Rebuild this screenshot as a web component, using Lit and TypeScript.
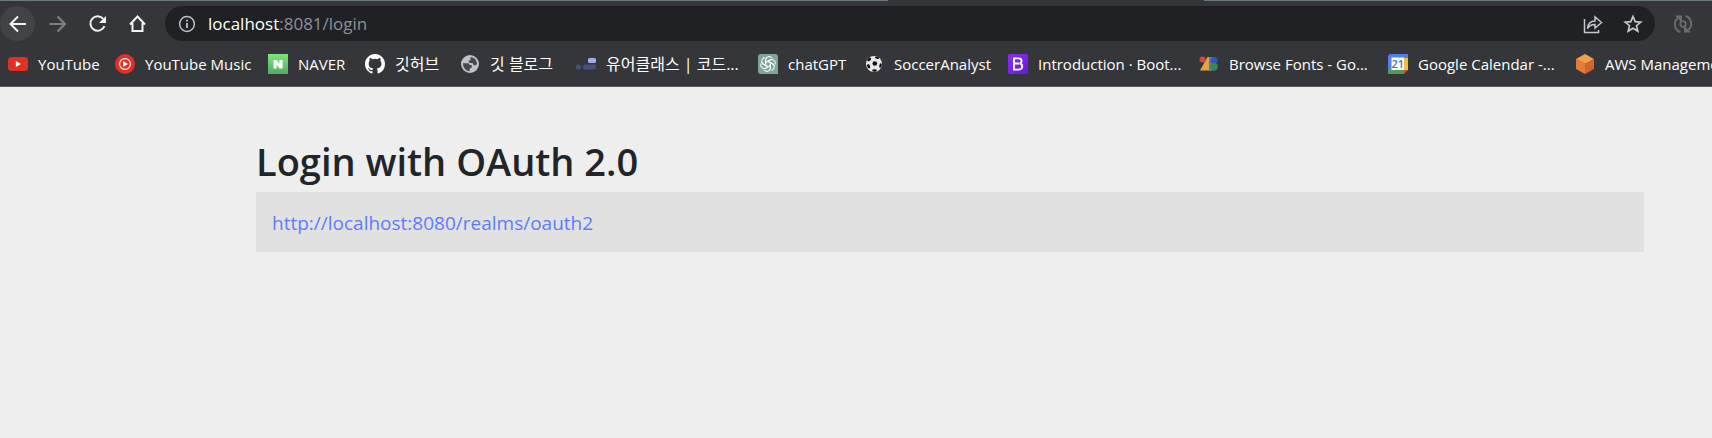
import { LitElement, html, svg, css } from "lit";
import { customElement } from "lit/decorators.js";

const icons = {
  youtube: svg`<rect y="3" width="20" height="14" rx="3.500" fill="#df3125"/><path d="M7.800 7v6l5.200-3z" fill="#fff"/>`,
  music: svg`<circle cx="10" cy="10" r="10" fill="#df3125"/><circle cx="10" cy="10" r="5.400" fill="none" stroke="#fff" stroke-width="1.100"/><path d="M8 6.900v6.200l5-3.100z" fill="#fff"/>`,
  naver: svg`<defs><linearGradient id="nv" x2="0" y2="1"><stop stop-color="#7ae779"/><stop offset="1" stop-color="#57a866"/></linearGradient></defs><rect width="20" height="20" fill="url(#nv)"/><path d="M5.500 6h3.200l2.700 3.900V6h3.200v8.400h-3.200L8.700 10.500v3.900H5.500z" fill="#fff"/>`,
  github: svg`<path transform="scale(1.25)" d="M8 0C3.580 0 0 3.580 0 8c0 3.540 2.290 6.530 5.470 7.590.4.070.55-.17.55-.38v-1.490c-2.010.37-2.530-.49-2.690-.94-.09-.23-.48-.94-.82-1.130-.28-.15-.68-.52-.01-.53.63-.01 1.080.58 1.230.82.72 1.210 1.870.87 2.330.66.070-.52.28-.87.51-1.070-1.780-.2-3.640-.89-3.640-3.950 0-.87.31-1.590.82-2.150-.08-.2-.36-1.020.08-2.120 0 0 .67-.21 2.200.82a7.500 7.500 0 0 1 4 0c1.530-1.040 2.200-.82 2.200-.82.44 1.100.16 1.920.08 2.120.51.56.82 1.270.82 2.150 0 3.070-1.870 3.750-3.650 3.950.29.25.54.73.54 1.480v2.200c0 .21.15.46.55.38A8 8 0 0 0 16 8c0-4.420-3.580-8-8-8z" fill="#fff"/>`,
  globe: svg`<circle cx="10" cy="10" r="9" fill="#bfc3c8"/><path d="M3 9.200h5.500l1.200 1.800h2v2.500l-2 1.200v2.500C5.600 17 3 13.600 3 9.200zM10.500 3c3.600.4 6.300 3.100 6.500 6.500l-.7 1.700h-2.500l-1.300-2.200H9.500l-1-2 2-1z" fill="#47494d"/>`,
  blocks: svg`<rect x="12" y="4" width="8" height="5" rx="1.500" fill="#a2adf0"/><rect y="10.500" width="5" height="5" rx="2" fill="#47527a"/><rect x="7" y="10.500" width="13" height="5" rx="2" fill="#47527a"/>`,
  gpt: svg`<path d="M3 0h14a3 3 0 0 1 3 3v17H3a3 3 0 0 1-3-3V3a3 3 0 0 1 3-3z" fill="#7fa597"/><g fill="none" stroke="#eef5f2" stroke-width="1.100">${[0, 60, 120, 180, 240, 300].map((a) => svg`<path transform="rotate(${a} 10 10)" d="M7.600 11.400V5.500a3.600 3.600 0 0 1 6.200-1.600M7.600 8.600l4.800-2.800a3.300 3.300 0 0 1 2.600-.2"/>`)}</g>`,
  ball: svg`<circle cx="10" cy="10" r="8" fill="#e9e9e9"/><g fill="#111"><ellipse cx="10.800" cy="9.500" rx="2.300" ry="2.300"/><ellipse cx="5.200" cy="5.400" rx="2.300" ry="1.400" transform="rotate(-40 5.200 5.400)"/><ellipse cx="13" cy="3.800" rx="2.200" ry="1" transform="rotate(22 13 3.800)"/><ellipse cx="4.600" cy="12.300" rx="1.400" ry="2.300" transform="rotate(-22 4.600 12.300)"/><ellipse cx="10.500" cy="16.500" rx="2.300" ry="1.200"/><ellipse cx="16.500" cy="11.500" rx="1.200" ry="2.300" transform="rotate(15 16.500 11.500)"/></g>`,
  boot: svg`<defs><linearGradient id="bs" x2="1" y2="1"><stop stop-color="#8a2cf5"/><stop offset="1" stop-color="#601ddb"/></linearGradient></defs><rect width="20" height="20" rx="2" fill="url(#bs)"/><path d="M6 4.400h4.700c3.500 0 3.700 4.300 1 5.100 3.500.5 3.400 6.100-1.100 6.100H6zM6 9.500h5" fill="none" stroke="#fff" stroke-width="1.900"/>`,
  fonts: svg`<path d="M8.500 3h4v13.500H1z" fill="#e5a33c"/><circle cx="3.500" cy="5.500" r="3" fill="#cf4b3d"/><path d="M10 3h4.500a4 4 0 0 1 1.500 7.200V16.500h-6z" fill="#4b7be0"/><circle cx="15" cy="6.500" r="3.500" fill="#3058b8"/><circle cx="15" cy="12.800" r="3.800" fill="#3a8a46"/>`,
  calendar: svg`<path d="M2 0h18v4H4v16H0V2z" fill="#557fe6"/><path d="M16 4h4v12h-4z" fill="#f0bd42"/><path d="M0 16h16v4H2a2 2 0 0 1-2-2z" fill="#4f9c52"/><path d="M16 16h4l-4 4z" fill="#d5483b"/><path d="M3.500 3.500h12.500v12.500h-12.500z" fill="#fff"/><text x="9.800" y="14" text-anchor="middle" font-family="Open Sans, sans-serif" font-size="11" font-weight="600" fill="#4770cf">21</text>`,
  aws: svg`<path d="M10 0l9 5-9 5-9-5z" fill="#f0a04b"/><path d="M1 5l9 4.500V20l-9-5z" fill="#e27b36"/><path d="M19 5l-9 4.500V20l9-5z" fill="#cf6530"/>`,
};

const bookmarks: [string, unknown, string?][] = [
  ["YouTube", icons.youtube],
  ["YouTube Music", icons.music],
  ["NAVER", icons.naver],
  ["깃허브", icons.github, "ko"],
  ["깃 블로그", icons.globe, "ko"],
  ["유어클래스 | 코드...", icons.blocks, "ko"],
  ["chatGPT", icons.gpt],
  ["SoccerAnalyst", icons.ball],
  ["Introduction · Boot...", icons.boot],
  ["Browse Fonts - Go...", icons.fonts],
  ["Google Calendar -...", icons.calendar],
  ["AWS Management", icons.aws],
];

const icon = (content: unknown) => html`<svg viewBox="0 0 20 20" width="20" height="20" aria-hidden="true">${content}</svg>`;

@customElement("app-root")
export class AppRoot extends LitElement {
  static styles = css`
    :host { display: block; min-height: 100vh; background: #eee; font-family: "Open Sans", "Noto Sans CJK KR", sans-serif; color: #212529; }
    * { box-sizing: border-box; }
    svg { display: block; flex: none; }
    button { display: grid; place-items: center; padding: 0; border: 0; background: none; color: #f1f3f4; border-radius: 50%; }
    .browser { background: #35363a; border-bottom: 1px solid #5b5c60; overflow: hidden; }
    .tabs { display: grid; grid-template-columns: 888px 316px 1fr; height: 1px; background: #6b7a80; }
    .active { grid-column: 2; background: #35363a; }
    .toolbar { display: flex; align-items: center; height: 45px; padding-right: 19px; }
    .nav { display: flex; gap: 5px; margin-right: 10px; }
    .nav button { width: 35px; height: 35px; }
    .nav .back { background: #424347; }
    .nav .forward { color: #7e8084; }
    .address { flex: 1; display: flex; align-items: center; height: 35px; padding: 0 12px; border-radius: 18px; background: #202124; color: #bdc1c6; }
    .address .url { flex: 1; margin-left: 11px; font-size: 17px; line-height: 24px; color: #8e9195; }
    .url .host { color: #fff; }
    .address button { width: 20px; height: 20px; margin-left: 20px; color: #c4c7cb; }
    .sync { width: 20px; height: 20px; margin-left: 18px; color: #6a6b6f; }
    .bookmarks { display: grid; grid-template-columns: 107px 153px 97px 95px 116px 182px 106px 144px 191px 189px 187px 137px; padding: 8px 0 12px 8px; }
    .bookmark { display: flex; align-items: center; gap: 10px; color: #fff; text-decoration: none; font-size: 15px; line-height: 20px; white-space: nowrap; }
    .bookmark:lang(ko) { font-size: 16px; }
    .content { padding: 50px 68px 0 256px; }
    h2 { margin: 0 0 7px; font-size: 38px; line-height: 48px; font-weight: 600; }
    .providers { width: 100%; border-spacing: 0; background: #e1e1e1; }
    td { height: 60px; padding: 2px 16px 0; font-size: 19px; line-height: 28px; }
    td a { color: #5c7cfa; text-decoration: none; }
  `;

  render() {
    return html`
      <header class="browser">
        <div class="tabs"><div class="active"></div></div>
        <div class="toolbar">
          <nav class="nav">
            <button class="back" aria-label="Back">${icon(svg`<path d="M18 10H3M10 2.500L2.500 10l7.500 7.500" fill="none" stroke="currentColor" stroke-width="2"/>`)}</button>
            <button class="forward" aria-label="Forward">${icon(svg`<path d="M1.500 10h15M9.500 2.500l7.500 7.500-7.500 7.500" fill="none" stroke="currentColor" stroke-width="2"/>`)}</button>
            <button aria-label="Reload">${icon(svg`<path d="M15.500 5a7.300 7.300 0 1 0 1 7.200" fill="none" stroke="currentColor" stroke-width="2"/><path d="M18 2v7h-7z" fill="currentColor"/>`)}</button>
            <button aria-label="Home">${icon(svg`<path d="M2 10.500l7.500-8 7.500 8M4.500 9v8h10V9" fill="none" stroke="currentColor" stroke-width="2"/>`)}</button>
          </nav>
          <div class="address">
            ${icon(svg`<circle cx="10" cy="10" r="7.400" fill="none" stroke="currentColor" stroke-width="1.500"/><path d="M10 9v5M10 5.800v1.800" stroke="currentColor" stroke-width="1.800"/>`)}
            <div class="url"><span class="host">localhost</span>:8081/login</div>
            <button aria-label="Share">${icon(svg`<path d="M1.500 5v13.500h14V16M4.500 14.500c.5-4.800 3-7.500 7.500-7.500V2.800l6.500 5.700L12 14.200v-3.700c-3.500-.1-5.800 1.200-7.500 4z" fill="none" stroke="currentColor" stroke-width="1.500"/>`)}</button>
            <button aria-label="Bookmark this page">${icon(svg`<path d="M10 2.500l2.200 5.100 5.500.5-4.200 3.600 1.300 5.400-4.800-2.900-4.800 2.900 1.300-5.400-4.200-3.600 5.500-.5z" fill="none" stroke="currentColor" stroke-width="1.700"/>`)}</button>
          </div>
          <button class="sync" aria-label="Sync">${icon(svg`<path d="M5 4a8 8 0 0 0 2.500 14M15 16a8 8 0 0 0-2.500-14" fill="none" stroke="currentColor" stroke-width="2"/><path d="M2 1.500h7v7zM18 18.500h-7v-7z" fill="currentColor"/><circle cx="10" cy="10" r="2.800" fill="#35363a" stroke="currentColor" stroke-width="1.800"/>`)}</button>
        </div>
        <nav class="bookmarks">
          ${bookmarks.map(([label, glyph, lang]) => html`<a class="bookmark" href="#" lang=${lang ?? "en"}>${icon(glyph)}<span>${label}</span></a>`)}
        </nav>
      </header>
      <main class="content">
        <h2>Login with OAuth 2.0</h2>
        <table class="providers"><tbody><tr><td><a href="#">http://localhost:8080/realms/oauth2</a></td></tr></tbody></table>
      </main>
    `;
  }
}
